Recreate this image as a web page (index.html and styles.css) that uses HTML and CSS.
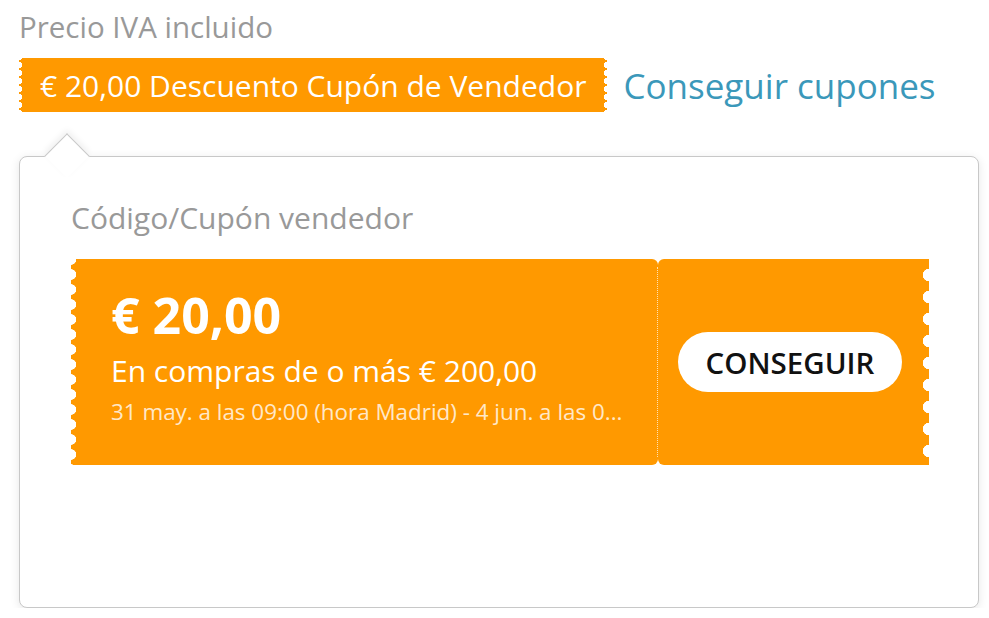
FILE: index.html
```html
<!DOCTYPE html>
<html lang="es">
<head>
    <meta charset="UTF-8">
    <meta name="viewport" content="width=device-width, initial-scale=1.0">
    <title>Cupones</title>
    <link rel="stylesheet" href="styles.css">
</head>
<body>

<div class="price-label">Precio IVA incluido</div>

<div class="tag-row">
    <span class="tag">€ 20,00 Descuento Cupón de Vendedor</span>
    <a class="get-link" href="#">Conseguir cupones</a>
</div>

<div class="popover">
    <div class="popover-title">Código/Cupón vendedor</div>
    <div class="coupon">
        <div class="coupon-main">
            <div class="coupon-amount">€ 20,00</div>
            <div class="coupon-min">En compras de o más € 200,00</div>
            <div class="coupon-date">31 may. a las 09:00 (hora Madrid) - 4 jun. a las 0...</div>
        </div>
        <div class="coupon-side">
            <button class="coupon-btn">CONSEGUIR</button>
        </div>
    </div>
</div>

</body>
</html>
```

FILE: styles.css
```css
body {
    font-family: 'Open Sans', 'Liberation Sans', sans-serif;
    margin: 0;
    padding: 0 0 0 19px;
    background-color: #fff;
    color: #333;
}

.price-label {
    font-size: 29.5px;
    line-height: 36px;
    color: #999;
    padding-top: 9px;
}

.tag-row {
    display: flex;
    align-items: center;
    margin-top: 13px;
}

.tag {
    position: relative;
    display: flex;
    align-items: center;
    height: 54px;
    padding: 0 21px;
    background-color: #ff9900;
    color: #fff;
    font-size: 30px;
}

.tag::before,
.tag::after {
    content: '';
    position: absolute;
    top: 0;
    bottom: 0;
    width: 4px;
}

.tag::before {
    left: 0;
    background: radial-gradient(circle at 0 50%, #fff 3px, transparent 3.5px) 0 3px / 4px 8px repeat-y;
}

.tag::after {
    right: 0;
    background: radial-gradient(circle at 100% 50%, #fff 3px, transparent 3.5px) 0 3px / 4px 8px repeat-y;
}

.get-link {
    margin-left: 16px;
    font-size: 35px;
    color: #3b98ba;
    text-decoration: none;
}

.popover {
    position: relative;
    box-sizing: border-box;
    width: 960px;
    height: 452px;
    margin-top: 44px;
    padding: 41px 49px 0 51px;
    background-color: #fff;
    border: 1px solid #c8c8c8;
    border-radius: 8px;
    box-shadow: 0 2px 10px rgba(0, 0, 0, 0.1);
}

.popover::before {
    content: '';
    position: absolute;
    left: 31px;
    top: -17px;
    width: 31px;
    height: 31px;
    background-color: #fff;
    border-top: 1px solid #c8c8c8;
    border-left: 1px solid #c8c8c8;
    transform: rotate(45deg);
    box-shadow: -3px -3px 6px rgba(0, 0, 0, 0.06);
}

.popover-title {
    font-size: 30px;
    line-height: 40px;
    color: #999;
}

.coupon {
    display: flex;
    height: 206px;
    margin-top: 21px;
}

.coupon-main {
    position: relative;
    flex: 1;
    min-width: 0;
    padding: 26px 20px 0 40px;
    background-color: #ff9900;
    border-radius: 0 6px 6px 0;
    color: #fff;
}

.coupon-main::before {
    content: '';
    position: absolute;
    left: 0;
    top: 0;
    bottom: 0;
    width: 5px;
    background: radial-gradient(circle at 0 50%, #fff 5px, transparent 5.5px) 0 8px / 5px 15px repeat-y;
}

.coupon-amount {
    font-size: 50px;
    font-weight: 700;
    line-height: 60px;
}

.coupon-min {
    margin-top: 6px;
    font-size: 30px;
    line-height: 40px;
}

.coupon-date {
    margin-top: 6px;
    font-size: 22.4px;
    line-height: 30px;
    color: rgba(255, 255, 255, 0.8);
    white-space: nowrap;
}

.coupon-side {
    position: relative;
    display: flex;
    align-items: center;
    width: 271px;
    padding-left: 20px;
    box-sizing: border-box;
    background-color: #ff9900;
    border-radius: 6px 0 0 6px;
}

.coupon-side::before {
    content: '';
    position: absolute;
    right: 0;
    top: 0;
    bottom: 0;
    width: 6px;
    background: radial-gradient(circle at 100% 50%, #fff 6px, transparent 6.5px) 0 5px / 6px 22px repeat-y;
}

.coupon-side::after {
    content: '';
    position: absolute;
    left: -1px;
    top: 8px;
    bottom: 8px;
    border-left: 1px dotted rgba(255, 255, 255, 0.7);
}

.coupon-btn {
    width: 224px;
    height: 60px;
    border: none;
    border-radius: 30px;
    background-color: #fff;
    color: #111;
    font-family: inherit;
    font-size: 29.5px;
    font-weight: 600;
    cursor: pointer;
}
```
